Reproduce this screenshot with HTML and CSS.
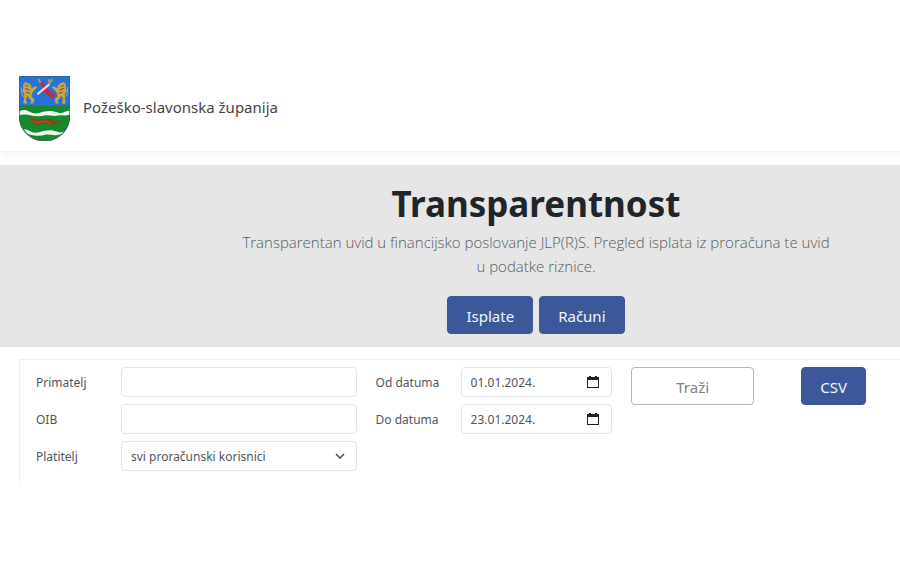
FILE: index.html
```html
<!DOCTYPE html>
<html lang="hr">

<head>
    <meta charset="UTF-8">
    <meta name="viewport" content="width=device-width, initial-scale=1.0">
    <title>Transparentnost - Požeško-slavonska županija</title>
    <link rel="stylesheet" href="styles.css">
</head>

<body>
    <header class="header">
        <svg class="grb" viewBox="0 0 50 64" role="img" aria-label="Grb">
            <defs>
                <clipPath id="stit">
                    <path d="M0 0H50V38C50 53 39 64 25 64S0 53 0 38Z" />
                </clipPath>
                <g id="lav">
                    <path d="M4 8L6 6L9 7L12 9L12 12L16 10L18 11L14 15L13 17L12 20L15 23L14 27H11L12 24L9 21L7 24L8 27H4L5 22L5 18L3 15L4 12Z" />
                    <path d="M5 20C1 20 3 15 2 11" fill="none" stroke="#c9a545" />
                    <path d="M6 9L9 10M6 12L10 14M7 16L11 17M9 20L7 23" stroke="#705c28" />
                </g>
            </defs>
            <g clip-path="url(#stit)">
                <path fill="#2672d8" d="M0 0H50V30H0Z" />
                <path fill="#158a2c" d="M0 29H50V64H0Z" />
                <path fill="#f0faf2" d="M0 35C5 32 8 34 12 36S21 36 25 35S34 34 38 36S46 34 50 34V38C44 40 42 38 38 39S29 38 25 39S16 40 12 39S4 37 0 39Z" />
                <path fill="#f0faf2" d="M0 54C5 51 8 53 12 55S21 55 25 54S34 53 38 55S46 53 50 53V57C44 59 42 57 38 58S29 57 25 58S16 59 12 58S4 56 0 58Z" />
                <path fill="#c22b44" d="M20 6L24 5L26 11L31 15L36 18L34 23L28 19L25 16L21 17L23 12Z" />
                <path d="M18 18L30 8" stroke="#dce4f2" stroke-width="2" />
                <path d="M19 3L21 7M29 3L30 7L33 3" fill="none" stroke="#a99a62" stroke-width="2" />
                <use href="#lav" fill="#c9a545" />
                <use href="#lav" fill="#c9a545" transform="translate(50 0) scale(-1 1)" />
                <path fill="#82471c" d="M11 42L14 41L17 43L23 42L31 42L36 45L43 44L38 47L35 47L34 49H31L30 47L21 47L18 49H15L16 46L12 46Z" />
                <path d="M13 44L19 46L25 44L31 46" fill="none" stroke="#bb512b" />
            </g>
            <path fill="none" stroke="#31584a" d="M0 0H50V38C50 53 39 64 25 64S0 53 0 38Z" />
        </svg>
        <span class="naziv">Požeško-slavonska županija</span>
    </header>

    <section class="hero">
        <h1>Transparentnost</h1>
        <p>Transparentan uvid u financijsko poslovanje JLP(R)S. Pregled isplata iz proračuna te uvid u podatke riznice.</p>
        <div class="gumbi">
            <a class="btn btn-plavi" href="#isplate">Isplate</a>
            <a class="btn btn-plavi" href="#racuni">Računi</a>
        </div>
    </section>

    <form class="filter">
        <div class="polja">
            <label for="primatelj">Primatelj</label>
            <input class="polje" id="primatelj" type="text">
            <label for="oib">OIB</label>
            <input class="polje" id="oib" type="text">
            <label for="platitelj">Platitelj</label>
            <select class="polje" id="platitelj">
                <option>svi proračunski korisnici</option>
            </select>
        </div>
        <div class="polja">
            <label for="odDatuma">Od datuma</label>
            <div class="polje datum">
                <input id="odDatuma" type="text" value="01.01.2024.">
                <button type="button" aria-label="Odaberi početni datum">
                    <svg viewBox="0 0 12 12"><path d="M2 0H4V1H8V0H10V1H12V12H0V1H2ZM1 4V11H11V4Z" fill-rule="evenodd" /></svg>
                </button>
            </div>
            <label for="doDatuma">Do datuma</label>
            <div class="polje datum">
                <input id="doDatuma" type="text" value="23.01.2024.">
                <button type="button" aria-label="Odaberi završni datum">
                    <svg viewBox="0 0 12 12"><path d="M2 0H4V1H8V0H10V1H12V12H0V1H2ZM1 4V11H11V4Z" fill-rule="evenodd" /></svg>
                </button>
            </div>
        </div>
        <button class="btn btn-trazi" type="submit">Traži</button>
        <button class="btn btn-plavi btn-csv" type="button">CSV</button>
    </form>
</body>

</html>
```
FILE: styles.css
```css
* {
    box-sizing: border-box;
}

body {
    margin: 0;
    padding-top: 66px;
    font-family: "Segoe UI", "Noto Sans", sans-serif;
    font-size: 12px;
    color: #50555a;
    background-color: #fff;
}

.header {
    display: flex;
    align-items: center;
    gap: 13px;
    padding: 10px 19px;
    border-bottom: 1px solid #f1f1f1;
    box-shadow: 0 4px 6px rgba(0, 0, 0, 0.04);
}

.grb {
    width: 51px;
    height: 65px;
}

.naziv {
    padding-bottom: 4px;
    font-size: 15px;
    color: #444;
}

.hero {
    margin-top: 13px;
    padding: 16px 68px 12px 240px;
    background-color: #e6e6e6;
    border-bottom: 1px solid #dedede;
    text-align: center;
}

.hero h1 {
    margin: 0 0 3px;
    font-size: 35px;
    line-height: 46px;
    font-weight: 700;
    color: #212529;
}

.hero p {
    margin: 0 0 18px;
    font-family: "Segoe UI", "Open Sans", sans-serif;
    font-size: 15px;
    line-height: 24px;
    font-weight: 300;
    color: #555b61;
}

.gumbi {
    display: flex;
    justify-content: center;
    gap: 6px;
}

.btn {
    height: 38px;
    padding: 0 18px;
    border: 1px solid #3b5998;
    border-radius: 4px;
    font-family: inherit;
    font-size: 15px;
    line-height: 38px;
    text-decoration: none;
    cursor: pointer;
}

.btn-plavi {
    background-color: #3b5998;
    color: #f4f6fa;
}

.filter {
    display: grid;
    grid-template-columns: minmax(0, 320fr) minmax(0, 236fr) minmax(0, 123fr) auto;
    align-items: start;
    gap: 19px;
    margin: 12px 0 0 19px;
    padding: 7px 34px 15px 16px;
    border-top: 1px solid #eee;
    border-left: 1px solid #f1f1f1;
}

.polja {
    display: grid;
    grid-template-columns: 85px minmax(0, 1fr);
    align-items: center;
    gap: 7px 0;
}

.polje {
    width: 100%;
    height: 30px;
    padding: 0 9px;
    border: 1px solid #e1e4e6;
    border-radius: 4px;
    background-color: #fff;
    font-family: inherit;
    font-size: 12px;
    color: #50555a;
}

select.polje {
    appearance: none;
    background: url("data:image/svg+xml,%3Csvg xmlns='http://www.w3.org/2000/svg' viewBox='0 0 10 6'%3E%3Cpath d='M1 1l4 4 4-4' fill='none' stroke='%23454b50' stroke-width='1.5'/%3E%3C/svg%3E") no-repeat right 11px center / 10px 6px;
}

.datum {
    display: flex;
    align-items: center;
    padding-right: 12px;
}

.datum input {
    flex: 1;
    min-width: 0;
    padding: 0;
    border: 0;
    font: inherit;
    color: inherit;
    background: none;
}

.datum button {
    display: flex;
    padding: 0;
    border: 0;
    background: none;
    cursor: pointer;
}

.datum svg {
    width: 12px;
    height: 12px;
    fill: #222;
}

.btn-trazi {
    border-color: #b3b7bb;
    background-color: #fff;
    color: #7d8388;
}

.btn-csv {
    margin-left: 28px;
}
```
